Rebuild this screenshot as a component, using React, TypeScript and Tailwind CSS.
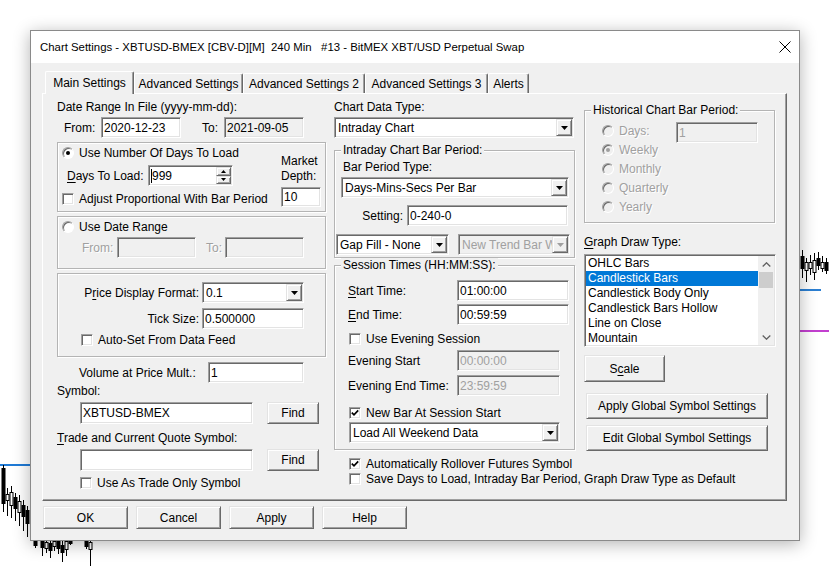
import React from 'react';

// classic win32 3D frames
const SUNKEN =
  'border border-t-[#a0a0a0] border-l-[#a0a0a0] border-r-white border-b-white shadow-[inset_1px_1px_0_#696969,inset_-1px_-1px_0_#e3e3e3]';
const RAISED =
  'border border-t-[#e3e3e3] border-l-[#e3e3e3] border-r-[#696969] border-b-[#696969] shadow-[inset_1px_1px_0_#fff,inset_-1px_-1px_0_#a0a0a0]';
const ETCHED = 'text-[#a0a0a0] [text-shadow:1px_1px_0_#fff]';
const GROUP = 'relative border border-[#b4b4b4] shadow-[inset_1px_1px_0_#fff,1px_1px_0_#fff]';

type P = { className?: string; children?: React.ReactNode };

function U({ children }: P) {
  return <span className="underline underline-offset-[2px]">{children}</span>;
}

function TextBox({
  className = '',
  disabled = false,
  readOnly = false,
  children,
}: P & { disabled?: boolean; readOnly?: boolean }) {
  const bg = disabled ? 'bg-[#f0f0f0] text-[#a0a0a0]' : readOnly ? 'bg-[#f0f0f0]' : 'bg-white';
  return (
    <div className={`${SUNKEN} ${bg} flex items-center pl-[2px] overflow-hidden whitespace-nowrap shrink-0 ${className}`}>
      {children}
    </div>
  );
}

function Tri({ up = false, color = '#000', w = 7, h = 4 }: { up?: boolean; color?: string; w?: number; h?: number }) {
  return (
    <svg width={w} height={h} viewBox={`0 0 ${w} ${h}`}>
      <polygon points={up ? `0,${h} ${w},${h} ${w / 2},0` : `0,0 ${w},0 ${w / 2},${h}`} fill={color} />
    </svg>
  );
}

function Combo({ className = '', disabled = false, children }: P & { disabled?: boolean }) {
  return (
    <div
      className={`${SUNKEN} ${disabled ? 'bg-[#f0f0f0] text-[#a0a0a0]' : 'bg-white'} flex items-stretch p-[1px] shrink-0 ${className}`}
    >
      <span className="flex-1 min-w-0 overflow-hidden whitespace-nowrap flex items-center pl-[2px]">{children}</span>
      <span className={`${RAISED} bg-[#f0f0f0] w-[16px] shrink-0 flex items-center justify-center`}>
        <Tri color={disabled ? '#a0a0a0' : '#000'} />
      </span>
    </div>
  );
}

function Check({
  checked = false,
  className = '',
  h = 'h-[14px]',
  children,
}: P & { checked?: boolean; h?: string }) {
  return (
    <div className={`flex items-center whitespace-nowrap ${h} ${className}`}>
      <span className={`${SUNKEN} bg-white w-[12px] h-[12px] shrink-0 flex items-center justify-center`}>
        {checked && (
          <svg width="8" height="8" viewBox="0 0 8 8">
            <polyline points="0.8,3.6 3,5.8 7.2,1.4" fill="none" stroke="#000" strokeWidth="1.7" />
          </svg>
        )}
      </span>
      <span className="ml-[5px]">{children}</span>
    </div>
  );
}

function Radio({
  checked = false,
  disabled = false,
  className = '',
  h = 'h-[14px]',
  children,
}: P & { checked?: boolean; disabled?: boolean; h?: string }) {
  return (
    <div className={`flex items-center whitespace-nowrap shrink-0 ${h} ${className}`}>
      <span
        className={`w-[12px] h-[12px] rounded-full border border-t-[#a0a0a0] border-l-[#a0a0a0] border-r-white border-b-white shadow-[inset_1px_1px_0_#696969] ${
          disabled ? 'bg-[#f0f0f0]' : 'bg-white'
        } flex items-center justify-center shrink-0`}
      >
        {checked && <span className={`w-[4px] h-[4px] rounded-full ${disabled ? 'bg-[#a0a0a0]' : 'bg-black'}`} />}
      </span>
      <span className={`ml-[5px] ${disabled ? ETCHED : ''}`}>{children}</span>
    </div>
  );
}

function Btn({ className = '', children }: P) {
  return (
    <div className={`${RAISED} bg-[#f0f0f0] flex items-center justify-center whitespace-nowrap shrink-0 ${className}`}>
      {children}
    </div>
  );
}

function Group({ legend, className = '', children }: P & { legend?: string }) {
  return (
    <div className={`${GROUP} flex flex-col shrink-0 ${className}`}>
      {legend && (
        <span className="absolute left-[6px] top-[-8px] px-[2px] bg-[#f0f0f0] leading-[14px] whitespace-nowrap">
          {legend}
        </span>
      )}
      {children}
    </div>
  );
}

function DaysBox() {
  return (
    <div className={`${SUNKEN} bg-white w-[85px] h-[21px] flex items-stretch p-[1px] shrink-0`}>
      <div className="flex-1 flex items-center pl-[1px]">
        <span className="w-[1px] h-[14px] bg-black" />
        999
      </div>
      <div className="w-[15px] flex flex-col">
        <div className={`${RAISED} bg-[#f0f0f0] flex-1 flex items-center justify-center`}>
          <Tri up w={5} h={3} />
        </div>
        <div className={`${RAISED} bg-[#f0f0f0] flex-1 flex items-center justify-center`}>
          <Tri w={5} h={3} />
        </div>
      </div>
    </div>
  );
}

function ListBox({ className = '' }: P) {
  const items = [
    'OHLC Bars',
    'Candlestick Bars',
    'Candlestick Body Only',
    'Candlestick Bars Hollow',
    'Line on Close',
    'Mountain',
  ];
  return (
    <div className={`${SUNKEN} bg-white w-[192px] h-[93px] p-[1px] flex shrink-0 ${className}`}>
      <div className="flex-1 flex flex-col overflow-hidden">
        {items.map((t, i) => (
          <div
            key={t}
            className={`h-[15px] leading-[15px] pl-[2px] whitespace-nowrap ${i === 1 ? 'bg-[#0078d7] text-white' : ''}`}
          >
            {t}
          </div>
        ))}
      </div>
      <div className="w-[16px] bg-[#f0f0f0] flex flex-col">
        <div className="h-[16px] flex items-center justify-center">
          <svg width="9" height="5" viewBox="0 0 9 5">
            <polyline points="0.7,4.5 4.5,0.8 8.3,4.5" fill="none" stroke="#606060" strokeWidth="1.3" />
          </svg>
        </div>
        <div className="h-[16px] mx-[1px] bg-[#cdcdcd]" />
        <div className="flex-1" />
        <div className="h-[16px] flex items-center justify-center">
          <svg width="9" height="5" viewBox="0 0 9 5">
            <polyline points="0.7,0.5 4.5,4.2 8.3,0.5" fill="none" stroke="#606060" strokeWidth="1.3" />
          </svg>
        </div>
      </div>
    </div>
  );
}

// x, high, low, open(top of body), close(bottom of body), filled
const candles: [number, number, number, number, number, boolean][] = [
  [3.5, 465, 512, 468, 503, true],
  [7.5, 488, 516, 494, 500, false],
  [11.5, 486, 518, 492, 505, false],
  [15.5, 493, 521, 497, 508, true],
  [19.5, 495, 526, 501, 512, false],
  [23.5, 500, 531, 505, 516, true],
  [27.5, 506, 537, 510, 523, true],
  [35.5, 538, 548, 541, 545, true],
  [42.5, 538, 556, 541, 547, true],
  [46.5, 538, 553, 542, 548, false],
  [50.5, 538, 558, 543, 550, true],
  [54.5, 538, 551, 541, 546, false],
  [58.5, 538, 554, 541, 548, true],
  [62.5, 538, 562, 545, 552, true],
  [66.5, 538, 556, 541, 549, false],
  [70.5, 538, 545, 541, 543, true],
  [86.5, 538, 549, 541, 546, true],
  [90.5, 538, 566, 542, 549, false],
  [802.5, 250, 278, 256, 268, true],
  [806.5, 258, 282, 262, 270, false],
  [810.5, 255, 275, 262, 268, false],
  [814.5, 253, 280, 260, 272, false],
  [818.5, 252, 270, 258, 265, true],
  [822.5, 256, 272, 262, 268, false],
  [826.5, 258, 274, 262, 270, true],
];

function Backdrop() {
  return (
    <svg className="absolute inset-0" width="829" height="587" viewBox="0 0 829 587">
      <line x1="0" y1="465" x2="31" y2="465" stroke="#1f7ad6" strokeWidth="2" />
      {candles.map(([x, hi, lo, o, c, filled], i) => (
        <g key={i}>
          <line x1={x} y1={hi} x2={x} y2={lo} stroke="#000" strokeWidth="1" />
          <rect
            x={x - 1.5}
            y={o + 0.5}
            width="3"
            height={c - o}
            fill={filled ? '#000' : '#fff'}
            stroke="#000"
            strokeWidth="1"
          />
        </g>
      ))}
      <line x1="800" y1="290" x2="821" y2="290" stroke="#2b7fd2" strokeWidth="2" />
      <line x1="800" y1="331" x2="829" y2="331" stroke="#c23fcf" strokeWidth="2" />
    </svg>
  );
}

function Tabs() {
  const tabs: [string, string][] = [
    ['Main Settings', 'w-[89px]'],
    ['Advanced Settings', 'w-[109px]'],
    ['Advanced Settings 2', 'w-[122px]'],
    ['Advanced Settings 3', 'w-[123px]'],
    ['Alerts', 'w-[41px]'],
  ];
  return (
    <div className="relative z-10 h-[22px] flex items-end pl-[3px] shrink-0">
      {tabs.map(([t, w], i) => (
        <div
          key={t}
          className={`${w} ${
            i === 0 ? 'h-[23px] -mb-[1px]' : 'h-[20px]'
          } bg-[#f0f0f0] flex items-center justify-center border-t border-l border-r border-t-white border-l-white border-r-[#696969] shadow-[inset_-1px_0_0_#a0a0a0] rounded-t-[2px] whitespace-nowrap`}
        >
          {t}
        </div>
      ))}
    </div>
  );
}

function LeftColumn() {
  return (
    <div className="w-[269px] flex flex-col shrink-0">
      <div className="mt-[5px] h-[14px] whitespace-nowrap">Date Range In File (yyyy-mm-dd):</div>
      <div className="mt-[3px] h-[21px] flex items-center pl-[7px]">
        <span className="w-[37px]">From:</span>
        <TextBox className="w-[80px] h-[21px]">2020-12-23</TextBox>
        <span className="ml-[21px] w-[22px]">To:</span>
        <TextBox readOnly className="w-[80px] h-[21px]">
          2021-09-05
        </TextBox>
      </div>

      <Group className="mt-[4px] h-[70px] !flex-row">
        <div className="w-[223px] flex flex-col pl-[4px] pt-[3px]">
          <Radio checked>Use Number Of Days To Load</Radio>
          <div className="mt-[5px] h-[21px] flex items-center">
            <span className="ml-[5px] w-[81px] whitespace-nowrap">
              <U>D</U>ays To Load:
            </span>
            <DaysBox />
          </div>
          <Check className="mt-[6px]">Adjust Proportional With Bar Period</Check>
        </div>
        <div className="flex flex-col pt-[11px]">
          <span className="leading-[15px]">
            Market
            <br />
            Depth:
          </span>
          <TextBox className="mt-[3px] w-[40px] h-[20px]">10</TextBox>
        </div>
      </Group>

      <Group className="mt-[4px] h-[53px] pl-[4px] pt-[3px]">
        <Radio>Use Date Range</Radio>
        <div className="mt-[3px] h-[21px] flex items-center">
          <span className={`ml-[20px] w-[35px] ${ETCHED}`}>From:</span>
          <TextBox disabled className="w-[79px] h-[21px]" />
          <span className={`ml-[10px] w-[19px] ${ETCHED}`}>To:</span>
          <TextBox disabled className="w-[79px] h-[21px]" />
        </div>
      </Group>

      <Group className="mt-[4px] h-[84px] pt-[8px]">
        <div className="h-[21px] flex items-center">
          <span className="w-[144px] text-right pr-[3px] whitespace-nowrap">
            P<U>r</U>ice Display Format:
          </span>
          <Combo className="w-[102px] h-[21px]">0.1</Combo>
        </div>
        <div className="mt-[5px] h-[21px] flex items-center">
          <span className="w-[144px] text-right pr-[3px]">Tick Size:</span>
          <TextBox className="w-[102px] h-[21px]">0.500000</TextBox>
        </div>
        <Check className="mt-[4px] ml-[23px]">Auto-Set From Data Feed</Check>
      </Group>

      <div className="mt-[5px] h-[21px] flex items-center">
        <span className="ml-[22px] w-[129px] whitespace-nowrap">Volume at Price Mult.:</span>
        <TextBox className="w-[96px] h-[21px]">1</TextBox>
      </div>
      <div className="mt-[1px] h-[14px]">Symbol:</div>
      <div className="mt-[4px] h-[22px] flex items-center">
        <TextBox className="ml-[23px] w-[173px] h-[22px]">XBTUSD-BMEX</TextBox>
        <Btn className="ml-[14px] w-[52px] h-[22px]">Find</Btn>
      </div>
      <div className="mt-[7px] h-[14px] whitespace-nowrap">
        <U>T</U>rade and Current Quote Symbol:
      </div>
      <div className="mt-[4px] h-[22px] flex items-center">
        <TextBox className="ml-[23px] w-[173px] h-[22px]" />
        <Btn className="ml-[14px] w-[52px] h-[22px]">Find</Btn>
      </div>
      <Check className="mt-[5px] ml-[23px]">Use As Trade Only Symbol</Check>
    </div>
  );
}

function MiddleColumn() {
  return (
    <div className="ml-[8px] w-[241px] flex flex-col shrink-0">
      <div className="mt-[5px] h-[14px]">Chart Data Type:</div>
      <Combo className="mt-[3px] w-[240px] h-[21px]">Intraday Chart</Combo>

      <Group legend="Intraday Chart Bar Period:" className="mt-[12px] h-[108px] pt-[9px]">
        <div className="ml-[8px] h-[14px]">Bar Period Type:</div>
        <Combo className="mt-[3px] ml-[6px] w-[228px] h-[21px]">Days-Mins-Secs Per Bar</Combo>
        <div className="mt-[7px] h-[21px] flex items-center">
          <span className="w-[72px] text-right pr-[4px]">Setting:</span>
          <TextBox className="w-[161px] h-[21px]">0-240-0</TextBox>
        </div>
        <div className="mt-[8px] ml-[1px] h-[21px] flex items-center">
          <Combo className="w-[113px] h-[21px]">Gap Fill - None</Combo>
          <Combo disabled className="ml-[9px] w-[112px] h-[21px]">
            New Trend Bar When Outside
          </Combo>
        </div>
      </Group>

      <Group legend="Session Times (HH:MM:SS):" className="mt-[7px] h-[185px] pt-[14px]">
        <div className="h-[21px] flex items-center">
          <span className="ml-[13px] w-[109px]">
            <U>S</U>tart Time:
          </span>
          <TextBox className="w-[112px] h-[21px]">01:00:00</TextBox>
        </div>
        <div className="mt-[3px] h-[21px] flex items-center">
          <span className="ml-[13px] w-[109px]">
            <U>E</U>nd Time:
          </span>
          <TextBox className="w-[112px] h-[21px]">00:59:59</TextBox>
        </div>
        <Check className="mt-[7px] ml-[14px]">Use Evening Session</Check>
        <div className="mt-[4px] h-[21px] flex items-center">
          <span className="ml-[13px] w-[109px]">Evening Start</span>
          <TextBox disabled className="w-[103px] h-[21px]">
            00:00:00
          </TextBox>
        </div>
        <div className="mt-[4px] h-[21px] flex items-center">
          <span className="ml-[13px] w-[109px] whitespace-nowrap">Evening End Time:</span>
          <TextBox disabled className="w-[103px] h-[21px]">
            23:59:59
          </TextBox>
        </div>
        <Check checked className="mt-[10px] ml-[14px]">
          New Bar At Session Start
        </Check>
        <Combo className="mt-[2px] ml-[14px] w-[211px] h-[21px]">Load All Weekend Data</Combo>
      </Group>

      <Check checked className="mt-[7px] ml-[15px]">
        Automatically Rollover Futures Symbol
      </Check>
      <Check className="mt-[1px] ml-[15px]">
        Save Days to Load, Intraday Bar Period, Graph Draw Type as Default
      </Check>
    </div>
  );
}

function RightColumn() {
  return (
    <div className="ml-[9px] w-[192px] flex flex-col shrink-0">
      <Group legend="Historical Chart Bar Period:" className="mt-[15px] w-[191px] h-[113px] pt-[11px] pl-[17px]">
        <div className="h-[18px] flex items-start">
          <Radio disabled className="w-[74px]" h="h-[18px]">
            Days:
          </Radio>
          <TextBox disabled className="w-[82px] h-[21px]">
            1
          </TextBox>
        </div>
        <Radio disabled checked h="h-[19px]">
          Weekly
        </Radio>
        <Radio disabled h="h-[19px]">
          Monthly
        </Radio>
        <Radio disabled h="h-[19px]">
          Quarterly
        </Radio>
        <Radio disabled h="h-[19px]">
          Yearly
        </Radio>
      </Group>

      <div className="mt-[12px] h-[14px]">
        <U>G</U>raph Draw Type:
      </div>
      <ListBox className="mt-[5px]" />
      <Btn className="mt-[8px] w-[81px] h-[27px]">
        S<U>c</U>ale
      </Btn>
      <Btn className="mt-[11px] ml-[2px] w-[182px] h-[26px]">Apply Global Symbol Settings</Btn>
      <Btn className="mt-[6px] ml-[2px] w-[182px] h-[26px]">Edit Global Symbol Settings</Btn>
    </div>
  );
}

export default function App() {
  return (
    <div className="relative w-[829px] h-[587px] overflow-hidden bg-white text-[12px] leading-[14px] text-black font-['Liberation_Sans',Arial,sans-serif]">
      <Backdrop />

      {/* dialog window */}
      <div className="absolute left-[30px] top-[30px] w-[770px] h-[511px] flex flex-col border border-[#8a8a8a] bg-[#f0f0f0] shadow-[0_3px_16px_rgba(0,0,0,0.3)]">
        <div className="h-[32px] shrink-0 bg-white flex items-center justify-between pl-[9px] pr-[8px]">
          <span className="whitespace-pre text-[11.4px]">
            Chart Settings - XBTUSD-BMEX [CBV-D][M]  240 Min   #13 - BitMEX XBT/USD Perpetual Swap
          </span>
          <svg width="12" height="12" viewBox="0 0 12 12">
            <path d="M0.5 0.5 L11.5 11.5 M11.5 0.5 L0.5 11.5" stroke="#000" strokeWidth="1" />
          </svg>
        </div>

        <div className="flex-1 flex flex-col pl-[11px] pr-[12px] pt-[8px]">
          <Tabs />
          <div className="h-[408px] shrink-0 flex pt-[1px] pl-[14px] border border-t-white border-l-white border-r-[#696969] border-b-[#696969] shadow-[inset_-1px_-1px_0_#a0a0a0]">
            <LeftColumn />
            <MiddleColumn />
            <RightColumn />
          </div>
          <div className="mt-[5px] ml-[1px] flex gap-[8px]">
            <Btn className="w-[85px] h-[23px]">OK</Btn>
            <Btn className="w-[85px] h-[23px]">Cancel</Btn>
            <Btn className="w-[85px] h-[23px]">Apply</Btn>
            <Btn className="w-[85px] h-[23px]">Help</Btn>
          </div>
        </div>
      </div>
    </div>
  );
}
